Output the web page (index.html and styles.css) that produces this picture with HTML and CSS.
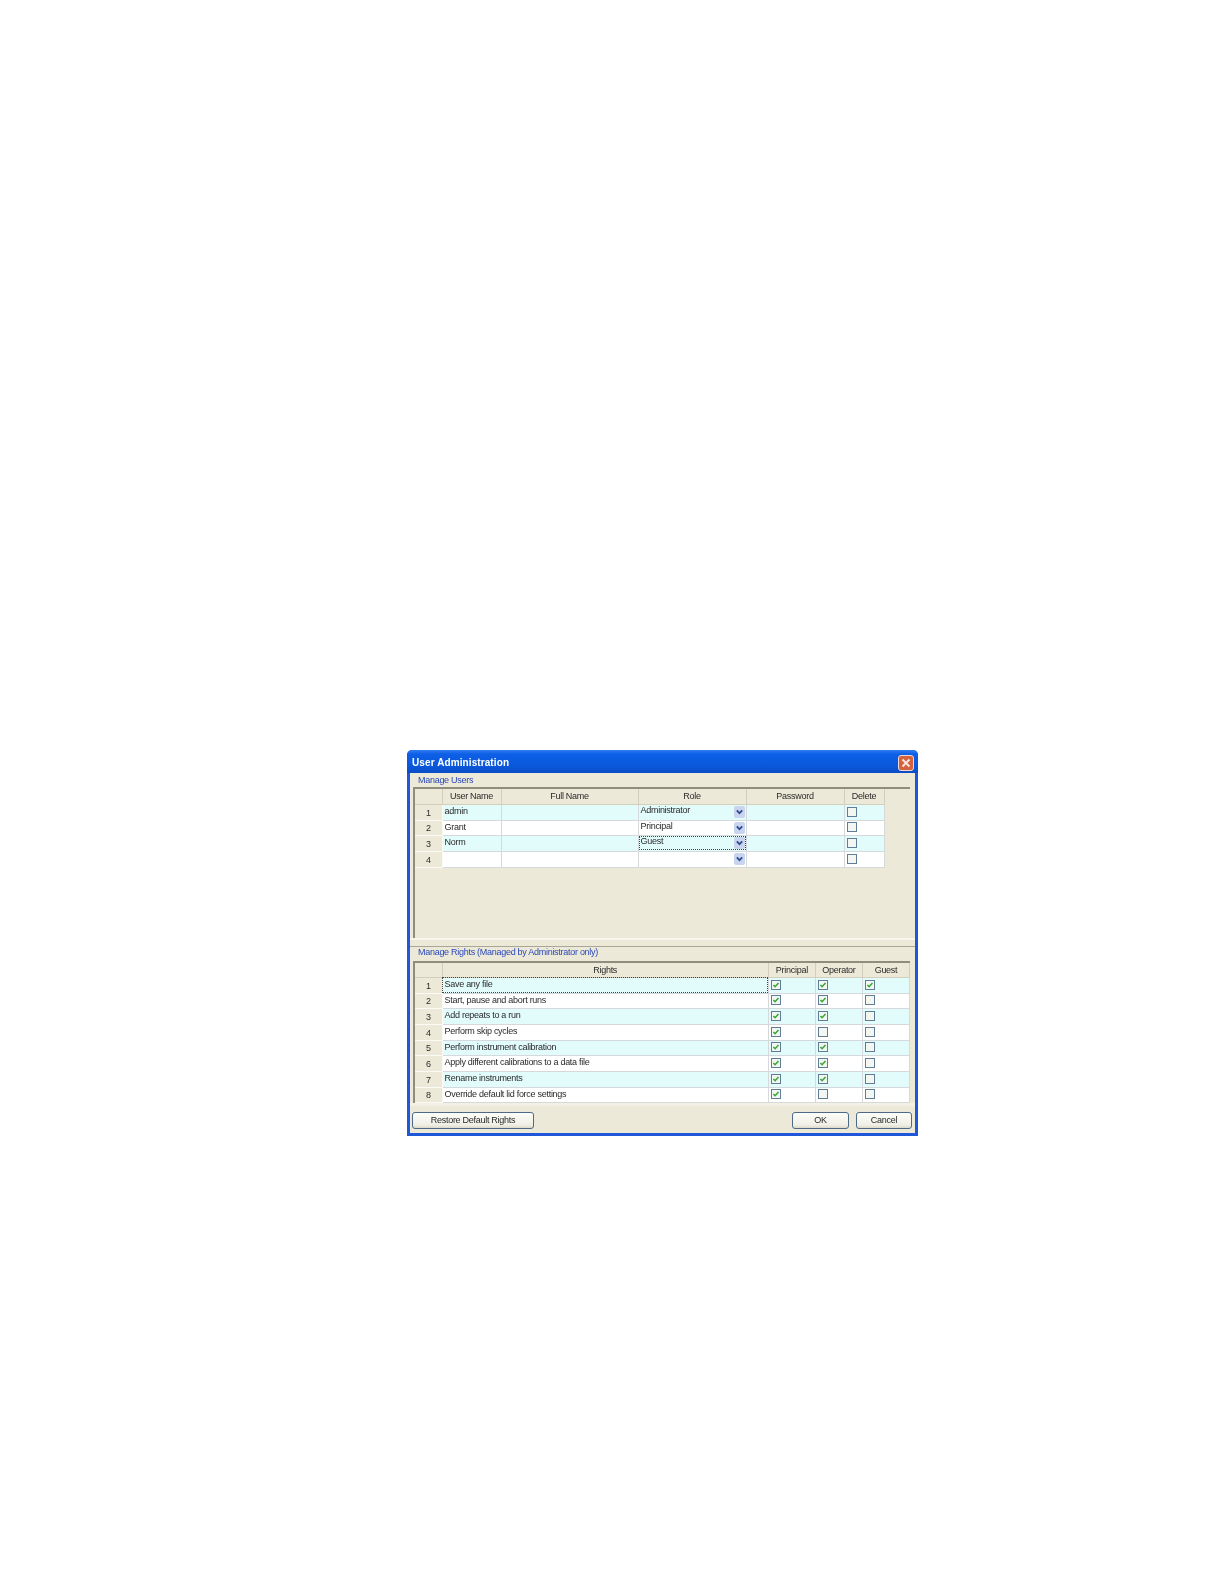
FILE: index.html
```html
<!DOCTYPE html>
<html lang="en">
<head>
    <meta charset="UTF-8">
    <title>User Administration</title>
    <link rel="stylesheet" href="styles.css">
</head>
<body>
    <svg class="defs" width="0" height="0">
        <symbol id="tick" viewBox="0 0 8 8"><path d="M1.4 4 L3.1 5.7 L6.5 2" fill="none" stroke="#35a835" stroke-width="1.6"/></symbol>
        <symbol id="chev" viewBox="0 0 11 12"><path d="M2.8 4.4 L5.5 7.2 L8.2 4.4" fill="none" stroke="#2f4f8f" stroke-width="1.8"/></symbol>
    </svg>

    <div class="window">
        <div class="titlebar">
            <span class="title">User Administration</span>
            <span class="close">
                <svg width="10" height="10" viewBox="0 0 10 10"><path d="M1.5 1.5 L8.5 8.5 M8.5 1.5 L1.5 8.5" stroke="#f6e6e0" stroke-width="2"/></svg>
            </span>
        </div>

        <div class="pane pane-users">
            <div class="pane-label">Manage Users</div>
            <div class="grid-frame">
                <table class="grid users">
                    <thead>
                        <tr><th class="rowhead"></th><th class="c-user">User Name</th><th class="c-full">Full Name</th><th class="c-role">Role</th><th class="c-pass">Password</th><th class="c-del">Delete</th></tr>
                    </thead>
                    <tbody>
                        <tr class="alt">
                            <td class="rowhead">1</td><td>admin</td><td></td>
                            <td class="role"><div class="role-cell">Administrator<svg class="drop"><use href="#chev"/></svg></div></td>
                            <td></td><td><span class="box"></span></td>
                        </tr>
                        <tr>
                            <td class="rowhead">2</td><td>Grant</td><td></td>
                            <td class="role"><div class="role-cell">Principal<svg class="drop"><use href="#chev"/></svg></div></td>
                            <td></td><td><span class="box"></span></td>
                        </tr>
                        <tr class="alt">
                            <td class="rowhead">3</td><td>Norm</td><td></td>
                            <td class="role"><div class="role-cell focus">Guest<svg class="drop"><use href="#chev"/></svg></div></td>
                            <td></td><td><span class="box"></span></td>
                        </tr>
                        <tr>
                            <td class="rowhead">4</td><td></td><td></td>
                            <td class="role"><div class="role-cell"><svg class="drop"><use href="#chev"/></svg></div></td>
                            <td></td><td><span class="box"></span></td>
                        </tr>
                    </tbody>
                </table>
            </div>
        </div>

        <div class="splitter"></div>

        <div class="pane pane-rights">
            <div class="pane-label">Manage Rights (Managed by Administrator only)</div>
            <div class="grid-frame">
                <table class="grid rights">
                    <thead>
                        <tr><th class="rowhead"></th><th class="c-right">Rights</th><th class="c-perm">Principal</th><th class="c-perm">Operator</th><th class="c-perm">Guest</th></tr>
                    </thead>
                    <tbody>
                        <tr class="alt"><td class="rowhead">1</td><td class="focus">Save any file</td><td><span class="box"><svg><use href="#tick"/></svg></span></td><td><span class="box"><svg><use href="#tick"/></svg></span></td><td><span class="box"><svg><use href="#tick"/></svg></span></td></tr>
                        <tr><td class="rowhead">2</td><td>Start, pause and abort runs</td><td><span class="box"><svg><use href="#tick"/></svg></span></td><td><span class="box"><svg><use href="#tick"/></svg></span></td><td><span class="box"></span></td></tr>
                        <tr class="alt"><td class="rowhead">3</td><td>Add repeats to a run</td><td><span class="box"><svg><use href="#tick"/></svg></span></td><td><span class="box"><svg><use href="#tick"/></svg></span></td><td><span class="box"></span></td></tr>
                        <tr><td class="rowhead">4</td><td>Perform skip cycles</td><td><span class="box"><svg><use href="#tick"/></svg></span></td><td><span class="box"></span></td><td><span class="box"></span></td></tr>
                        <tr class="alt"><td class="rowhead">5</td><td>Perform instrument calibration</td><td><span class="box"><svg><use href="#tick"/></svg></span></td><td><span class="box"><svg><use href="#tick"/></svg></span></td><td><span class="box"></span></td></tr>
                        <tr><td class="rowhead">6</td><td>Apply different calibrations to a data file</td><td><span class="box"><svg><use href="#tick"/></svg></span></td><td><span class="box"><svg><use href="#tick"/></svg></span></td><td><span class="box"></span></td></tr>
                        <tr class="alt"><td class="rowhead">7</td><td>Rename instruments</td><td><span class="box"><svg><use href="#tick"/></svg></span></td><td><span class="box"><svg><use href="#tick"/></svg></span></td><td><span class="box"></span></td></tr>
                        <tr><td class="rowhead">8</td><td>Override default lid force settings</td><td><span class="box"><svg><use href="#tick"/></svg></span></td><td><span class="box"></span></td><td><span class="box"></span></td></tr>
                    </tbody>
                </table>
            </div>
        </div>

        <div class="footer">
            <button class="btn btn-restore">Restore Default Rights</button>
            <div class="footer-right">
                <button class="btn btn-ok">OK</button>
                <button class="btn btn-cancel">Cancel</button>
            </div>
        </div>
    </div>
</body>
</html>
```

FILE: styles.css
```css
* {
    margin: 0;
    padding: 0;
    box-sizing: border-box;
}

body {
    background: #fff;
    padding: 750px 0 0 407px;
    font-family: "Liberation Sans", Arial, sans-serif;
    font-size: 9px;
    letter-spacing: -0.28px;
    color: #2a2a2a;
}

.defs {
    position: absolute;
}

.window {
    width: 511px;
    height: 386px;
    display: flex;
    flex-direction: column;
    background: #ece9d8;
    border: 3px solid #1f57d8;
    border-top: none;
    border-radius: 5px 5px 0 0;
    filter: blur(0.4px);
}

.titlebar {
    height: 23px;
    flex-shrink: 0;
    margin: 0 -3px;
    padding: 2px 4px 0 5px;
    display: flex;
    align-items: center;
    justify-content: space-between;
    border-radius: 5px 5px 0 0;
    background: linear-gradient(#2f7cf2 0, #0d5fe6 18%, #0a58dc 70%, #0b4cc4 100%);
}

.title {
    color: #fff;
    font-weight: bold;
    font-size: 10px;
    letter-spacing: 0.1px;
}

.close {
    width: 16px;
    height: 16px;
    display: flex;
    align-items: center;
    justify-content: center;
    background: #d4623e;
    border: 1px solid #f0d8d0;
    border-radius: 3px;
}

.pane {
    padding-left: 3px;
}

.pane-users {
    height: 165px;
    flex-shrink: 0;
}

.pane-rights {
    flex: 1;
}

.pane-label {
    height: 14px;
    padding: 2px 0 0 5px;
    color: #2a48b8;
}

.pane-rights .pane-label {
    padding-top: 0;
}

.grid-frame {
    border-top: 2px solid #8f8d7e;
    border-left: 2px solid #8f8d7e;
    margin-right: 5px;
}

.pane-users .grid-frame {
    height: 151px;
}

.splitter {
    height: 9px;
    flex-shrink: 0;
    border-top: 2px solid #f7f5ec;
    border-bottom: 1px solid #a8a696;
}

.grid {
    border-collapse: collapse;
    table-layout: fixed;
}

.users {
    width: 469px;
}

.rights {
    width: 495px;
}

.grid th {
    height: 15px;
    font-weight: normal;
    text-align: center;
    border-right: 1px solid #d2cfbe;
    border-bottom: 1px solid #d2cfbe;
    background: #ece9d8;
}

.rights th {
    height: 14px;
}

.grid td {
    height: 16px;
    padding: 0 0 2px 2px;
    border-right: 1px solid #d6d9dc;
    border-bottom: 1px solid #d6d9dc;
    background: #fff;
    white-space: nowrap;
    overflow: hidden;
}

.grid tbody tr:nth-child(3n+2) td {
    height: 15px;
}

.grid .alt td {
    background: #e2fbfb;
}

.grid td.rowhead,
.grid .alt td.rowhead {
    padding: 1px 0 0;
    text-align: center;
    background: #ece9d8;
    border-right: 1px solid #fbfaf4;
    border-bottom: 1px solid #fbfaf4;
}

.rowhead {
    width: 27px;
}

.c-user {
    width: 59px;
}

.c-full {
    width: 137px;
}

.c-role {
    width: 108px;
}

.c-pass {
    width: 98px;
}

.c-del {
    width: 40px;
}

.c-right {
    width: 326px;
}

.c-perm {
    width: 47px;
}

.grid td.role {
    padding: 0;
}

.role-cell {
    position: relative;
    height: 14px;
    padding: 0 0 0 2px;
}

.focus {
    outline: 1px dotted #444;
    outline-offset: -1px;
}

.drop {
    position: absolute;
    top: 1px;
    right: 1px;
    width: 11px;
    height: 12px;
    background: #c9d4ee;
    border-radius: 2px;
}

.box {
    display: block;
    width: 10px;
    height: 10px;
    margin: 1px 0 0;
    border: 1px solid #5f7d96;
    background: #f4f6f2;
}

.box svg {
    display: block;
    width: 8px;
    height: 8px;
}

.footer {
    height: 31px;
    flex-shrink: 0;
    padding: 6px 3px 0 2px;
    display: flex;
    justify-content: space-between;
    border-top: 3px solid #f3f1e6;
}

.footer-right {
    display: flex;
    gap: 7px;
}

.btn {
    height: 17px;
    font: inherit;
    letter-spacing: inherit;
    color: #2a2a2a;
    background: linear-gradient(#fdfdfa, #f0efe6 80%, #dcd8c8);
    border: 1px solid #4c6a86;
    border-radius: 3px;
}

.btn-restore {
    width: 122px;
}

.btn-ok {
    width: 57px;
}

.btn-cancel {
    width: 56px;
}
```
